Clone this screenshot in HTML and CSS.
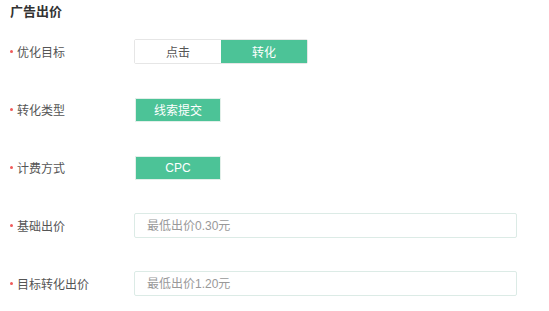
FILE: index.html
```html
<!DOCTYPE html>
<html lang="zh-CN">
<head>
    <meta charset="UTF-8" />
    <title>广告出价</title>
    <link rel="stylesheet" href="styles.css">
</head>
<body>
    <section class="bid-panel">
        <h2 class="title">广告出价</h2>
        <div class="form">
            <div class="form-row">
                <label class="label">优化目标</label>
                <div class="segment">
                    <button class="seg-btn">点击</button>
                    <button class="seg-btn active">转化</button>
                </div>
            </div>
            <div class="form-row">
                <label class="label">转化类型</label>
                <button class="tag-btn">线索提交</button>
            </div>
            <div class="form-row">
                <label class="label">计费方式</label>
                <button class="tag-btn">CPC</button>
            </div>
            <div class="form-row">
                <label class="label">基础出价</label>
                <input class="price-input" type="text" placeholder="最低出价0.30元" />
            </div>
            <div class="form-row">
                <label class="label">目标转化出价</label>
                <input class="price-input" type="text" placeholder="最低出价1.20元" />
            </div>
        </div>
    </section>
</body>
</html>
```

FILE: styles.css
```css
body {
    margin: 0;
    background: #fff;
    font-family: "Liberation Sans", "Noto Sans CJK SC", sans-serif;
    color: #555;
}
.bid-panel {
    padding: 2px 10px 0 10px;
}
.title {
    margin: 0;
    height: 20px;
    line-height: 20px;
    font-size: 13px;
    font-weight: bold;
    color: #333;
}
.form {
    padding-top: 17px;
}
.form-row {
    display: flex;
    align-items: center;
    height: 25px;
    margin-bottom: 33px;
}
.form-row:last-child {
    margin-bottom: 0;
}
.label {
    display: flex;
    align-items: center;
    width: 124px;
    font-size: 12px;
    color: #555;
}
.label::before {
    content: "";
    width: 3px;
    height: 3px;
    border-radius: 50%;
    background: #f05a5a;
    margin-right: 4px;
}
.segment {
    display: flex;
    border: 1px solid #e6e6e6;
    border-radius: 2px;
}
.seg-btn {
    width: 86px;
    height: 23px;
    border: none;
    background: #fff;
    font-family: inherit;
    font-size: 12px;
    color: #555;
    padding: 0;
}
.seg-btn.active {
    background: #4cc397;
    color: #fff;
}
.tag-btn {
    margin-left: 1px;
    width: 86px;
    height: 24px;
    border: 1px solid #e2efe9;
    background: #4cc397;
    color: #fff;
    font-family: inherit;
    font-size: 12px;
    padding: 0;
}
.price-input {
    box-sizing: border-box;
    width: 383px;
    height: 25px;
    border: 1px solid #dcebe6;
    border-radius: 2px;
    padding: 0 12px;
    font-family: inherit;
    font-size: 12px;
    color: #555;
}
.price-input::placeholder {
    color: #999;
}
```
